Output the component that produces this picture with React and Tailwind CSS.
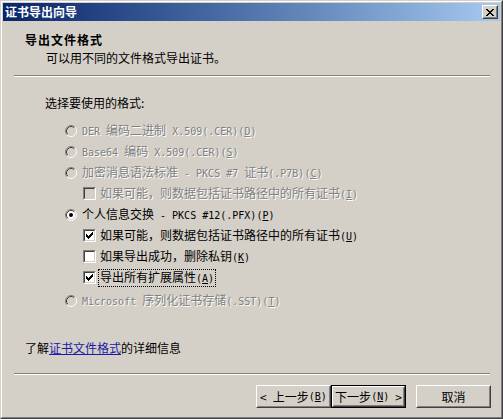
import React from 'react';

const isAscii = (p) => /^[\x20-\x7e]+$/.test(p);

// SimSun-like half-width latin: 10px mono gives ~6px advance
const Txt = ({ s }) =>
    s.split(/([\x20-\x7e]+)/).filter(Boolean).map((p, i) =>
        isAscii(p)
            ? <span key={i} className="font-['DejaVu_Sans_Mono',monospace] text-[10px] whitespace-pre">{p}</span>
            : <span key={i}>{p}</span>
    );

const Accel = ({ k }) => (
    <span className="font-['DejaVu_Sans_Mono',monospace] text-[10px]">
        (<span className="underline">{k}</span>)
    </span>
);

const Label = ({ text, k, disabled, focus }) => (
    <span
        className={`whitespace-nowrap px-[1px] ${disabled ? 'text-[#808080] [text-shadow:1px_1px_0_#ffffff]' : 'text-black'} ${focus ? 'outline outline-1 outline-dotted outline-black' : ''}`}
    >
        <Txt s={text} />
        <Accel k={k} />
    </span>
);

const Radio = ({ checked, disabled }) => (
    <svg width="12" height="12" viewBox="0 0 12 12" className="shrink-0">
        <circle cx="6" cy="6" r="5" fill={disabled ? '#d4d0c8' : '#ffffff'} />
        <path d="M2.11 9.89 A5.5 5.5 0 0 1 9.89 2.11" fill="none" stroke="#808080" strokeWidth="1" />
        <path d="M9.89 2.11 A5.5 5.5 0 0 1 2.11 9.89" fill="none" stroke="#ffffff" strokeWidth="1" />
        <path d="M2.82 9.18 A4.5 4.5 0 0 1 9.18 2.82" fill="none" stroke="#404040" strokeWidth="1" />
        <path d="M9.18 2.82 A4.5 4.5 0 0 1 2.82 9.18" fill="none" stroke="#d4d0c8" strokeWidth="1" />
        {checked && <circle cx="6" cy="6" r="2" fill="#000000" />}
    </svg>
);

const Check = ({ checked, disabled }) => (
    <span className="block w-[13px] h-[13px] shrink-0 border border-t-[#808080] border-l-[#808080] border-b-white border-r-white">
        <span className={`flex items-center justify-center w-full h-full border border-t-[#404040] border-l-[#404040] border-b-[#d4d0c8] border-r-[#d4d0c8] ${disabled ? 'bg-[#d4d0c8]' : 'bg-white'}`}>
            {checked && (
                <svg width="7" height="7" viewBox="0 0 7 7" shapeRendering="crispEdges">
                    <path
                        d="M6 0h1v1H6z M5 1h2v1H5z M0 2h1v1H0z M4 2h3v1H4z M0 3h2v1H0z M3 3h3v1H3z M0 4h5v1H0z M1 5h3v1H1z M2 6h1v1H2z"
                        fill="#000000"
                    />
                </svg>
            )}
        </span>
    </span>
);

const Separator = () => (
    <div className="ml-[11px] w-[476px]">
        <div className="h-px bg-[#808080]" />
        <div className="h-px bg-white" />
    </div>
);

const Button = ({ children, isDefault }) => (
    <div className={`w-[75px] h-[23px] ${isDefault ? 'border border-black' : ''}`}>
        <div className="w-full h-full border border-t-white border-l-white border-b-[#404040] border-r-[#404040]">
            <div className="w-full h-full flex items-center justify-center border border-t-[#d4d0c8] border-l-[#d4d0c8] border-b-[#808080] border-r-[#808080] text-black whitespace-nowrap">
                {children}
            </div>
        </div>
    </div>
);

const options = [
    { type: 'radio', text: 'DER 编码二进制 X.509(.CER)', k: 'D', disabled: true },
    { type: 'radio', text: 'Base64 编码 X.509(.CER)', k: 'S', disabled: true },
    { type: 'radio', text: '加密消息语法标准 - PKCS #7 证书(.P7B)', k: 'C', disabled: true },
    { type: 'check', text: '如果可能，则数据包括证书路径中的所有证书', k: 'I', disabled: true },
    { type: 'radio', text: '个人信息交换 - PKCS #12(.PFX)', k: 'P', checked: true },
    { type: 'check', text: '如果可能，则数据包括证书路径中的所有证书', k: 'U', checked: true },
    { type: 'check', text: '如果导出成功，删除私钥', k: 'K' },
    { type: 'check', text: '导出所有扩展属性', k: 'A', checked: true, focus: true },
];

export default function App() {
    return (
        <div className="w-[503px] h-[419px] bg-[#d4d0c8] font-['Noto_Sans_CJK_SC','Liberation_Sans',sans-serif] text-[12px] leading-[14px] text-black overflow-hidden">
            {/* window frame */}
            <div className="w-full h-full border border-t-[#d4d0c8] border-l-[#d4d0c8] border-b-[#404040] border-r-[#404040]">
                <div className="w-full h-full border border-t-white border-l-white border-b-[#808080] border-r-[#808080] p-px flex flex-col">
                    {/* title bar */}
                    <div className="h-[18px] shrink-0 flex items-center justify-between pl-[2px] pr-[2px] bg-gradient-to-r from-[#0a246a] to-[#a6caf0]">
                        <span className="text-white font-bold text-[12px] leading-[14px]">证书导出向导</span>
                        <div className="w-[16px] h-[14px] border border-t-white border-l-white border-b-[#404040] border-r-[#404040] bg-[#d4d0c8]">
                            <div className="w-full h-full flex items-center justify-center border border-t-[#d4d0c8] border-l-[#d4d0c8] border-b-[#808080] border-r-[#808080]">
                                <svg width="8" height="7" viewBox="0 0 8 7" shapeRendering="crispEdges">
                                    <path d="M0 0h2v1H0z M6 0h2v1H6z M1 1h2v1H1z M5 1h2v1H5z M2 2h4v1H2z M3 3h2v1H3z M2 4h4v1H2z M1 5h2v1H1z M5 5h2v1H5z M0 6h2v1H0z M6 6h2v1H6z" fill="#000000" />
                                </svg>
                            </div>
                        </div>
                    </div>

                    {/* header */}
                    <div className="h-[54px] shrink-0 pt-[12px] pl-[22px]">
                        <div className="font-bold tracking-[1px]">导出文件格式</div>
                        <div className="mt-[4px] pl-[21px]">可以用不同的文件格式导出证书。</div>
                    </div>
                    <Separator />

                    {/* body */}
                    <div className="pl-[42px] mt-[19px]">选择要使用的格式:</div>
                    <div className="mt-[10px] flex flex-col">
                        {options.map((o, i) => (
                            <div
                                key={i}
                                className={`h-[21px] flex items-center ${o.type === 'radio' ? 'pl-[62px] gap-[4px]' : 'pl-[80px] gap-[3px]'}`}
                            >
                                {o.type === 'radio'
                                    ? <Radio checked={o.checked} disabled={o.disabled} />
                                    : <Check checked={o.checked} disabled={o.disabled} />}
                                <Label text={o.text} k={o.k} disabled={o.disabled} focus={o.focus} />
                            </div>
                        ))}
                        <div className="h-[21px] mt-[2px] flex items-center pl-[62px] gap-[4px]">
                            <Radio disabled />
                            <Label text="Microsoft 序列化证书存储(.SST)" k="T" disabled />
                        </div>
                    </div>

                    <div className="mt-[30px] pl-[22px]">
                        了解<span className="text-[#1a1aa6] underline">证书文件格式</span>的详细信息
                    </div>
                    <div className="mt-[18px]">
                        <Separator />
                    </div>

                    {/* buttons */}
                    <div className="mt-[10px] flex justify-end pr-[9px]">
                        <Button>
                            <span className="mr-[6px]">&lt;</span>上一步<Accel k="B" />
                        </Button>
                        <Button isDefault>
                            下一步<Accel k="N" /><span className="ml-[6px]">&gt;</span>
                        </Button>
                        <div className="w-[10px]" />
                        <Button>取消</Button>
                    </div>
                </div>
            </div>
        </div>
    );
}
